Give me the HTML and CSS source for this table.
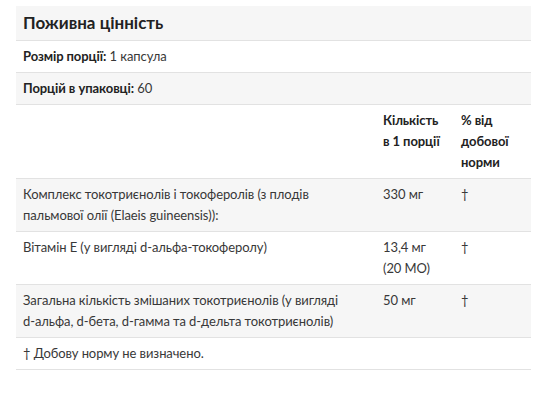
FILE: index.html
```html
<!DOCTYPE html>
<html lang="uk">
<head>
<meta charset="utf-8">
<link rel="stylesheet" href="styles.css">
</head>
<body>
<div class="wrap">
  <table class="facts">
    <colgroup>
      <col class="c-name">
      <col class="c-amt">
      <col class="c-dv">
    </colgroup>
    <tr class="title-row"><th colspan="3" class="title">Поживна цінність</th></tr>
    <tr class="plain"><td colspan="3"><b>Розмір порції:</b> 1 капсула</td></tr>
    <tr class="shade"><td colspan="3"><b>Порцій в упаковці:</b> 60</td></tr>
    <tr class="plain head">
      <td></td>
      <td><b>Кількість в&nbsp;1&nbsp;порції</b></td>
      <td><b>% від добової норми</b></td>
    </tr>
    <tr class="shade">
      <td>Комплекс токотриєнолів і токоферолів (з плодів пальмової олії (Elaeis guineensis)):</td>
      <td>330 мг</td>
      <td>†</td>
    </tr>
    <tr class="plain">
      <td>Вітамін E (у вигляді d-альфа-токоферолу)</td>
      <td><span class="blk">13,4 мг</span> <span class="blk">(20 МО)</span></td>
      <td>†</td>
    </tr>
    <tr class="shade">
      <td>Загальна кількість змішаних токотриєнолів (у вигляді <span class="nw">d-альфа,</span> <span class="nw">d-бета,</span> <span class="nw">d-гамма</span> та <span class="nw">d-дельта</span> токотриєнолів)</td>
      <td>50 мг</td>
      <td>†</td>
    </tr>
    <tr class="plain"><td colspan="3">† Добову норму не визначено.</td></tr>
  </table>
</div>
</body>
</html>
```
FILE: styles.css
```css
html, body {
  margin: 0;
  padding: 0;
  background: #fff;
}
.wrap {
  padding: 6px 0 0 16px;
}
.facts {
  width: 515px;
  border-collapse: collapse;
  font-family: Lato, "Open Sans", sans-serif;
  font-size: 13px;
  line-height: 21px;
  letter-spacing: -0.08px;
  color: #383838;
  table-layout: fixed;
}
.c-name { width: 360px; }
.c-amt { width: 78px; }
.c-dv { width: 77px; }
.facts td, .facts th {
  padding: 5px 7px;
  text-align: left;
  vertical-align: top;
  border-bottom: 1px solid #e2e2e2;
}
.facts b {
  font-weight: 700;
  color: #222;
}
.nw { white-space: nowrap; }
.blk { display: block; white-space: nowrap; }
.title-row th {
  background: #f6f6f6;
  font-size: 17px;
  line-height: 24px;
  font-weight: 700;
  letter-spacing: 0;
  color: #222;
}
.shade td { background: #f6f6f6; }
.plain td { background: #fff; }
```
